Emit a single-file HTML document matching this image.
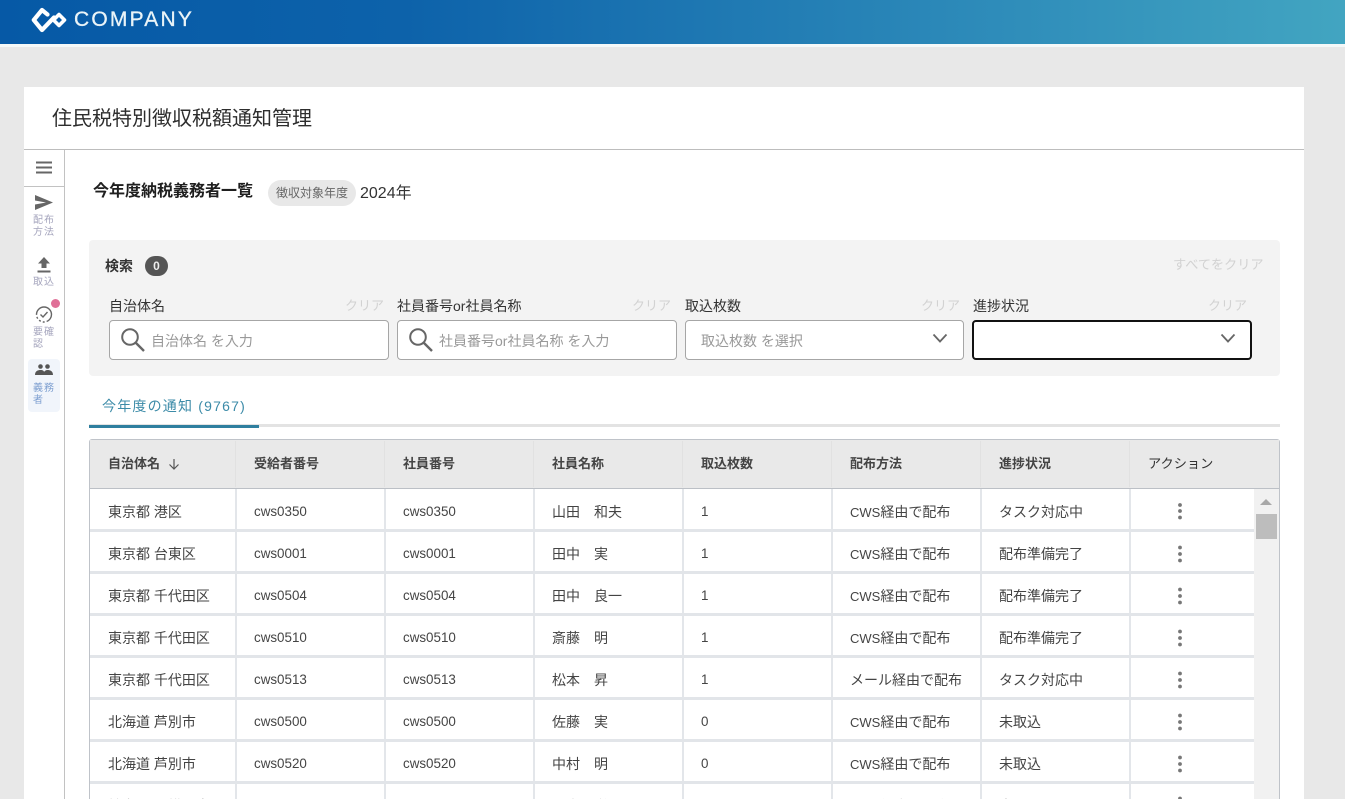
<!DOCTYPE html>
<html lang="ja"><head><meta charset="utf-8"><title>住民税特別徴収税額通知管理</title>
<style>
*{box-sizing:border-box}
html,body{margin:0;padding:0;width:1345px;height:799px;overflow:hidden;background:#e8e8e8;font-family:"Liberation Sans","Noto Sans CJK JP",sans-serif;color:#333}
#root{position:relative;width:1345px;height:799px;overflow:hidden;background:#e8e8e8}
.a{position:absolute;white-space:nowrap}
#hd{left:0;top:0;width:1345px;height:44px;background:linear-gradient(90deg,#0659a6 0%,#0d62aa 30%,#2f8dba 75%,#42a5c1 100%)}
#hl{left:0;top:44px;width:1345px;height:3px;background:#f4f8f8}
#card{left:24px;top:87px;width:1280px;height:712px;background:#fff}
.side{font-size:10px;line-height:12px;color:#a5a5bd;width:24px;letter-spacing:1px;white-space:normal}
.lb{font-size:14px;color:#333;line-height:18px;top:297px}
.cl{font-size:13px;color:#d2d2d2;line-height:16px;top:298px}
.inp{height:40px;background:#fff;border:1px solid #a6a6a6;border-radius:4px}
.ph{font-size:14px;color:#999;line-height:18px;top:332px}
.th{font-size:13px;font-weight:bold;color:#444;line-height:18px;top:455px}
.td{font-size:14px;color:#444;line-height:18px;transform:translateY(1px)}
.l{font-size:13.4px}
.c{font-size:13px}
.v{background:#e3e6ea;width:2px}
.rs{left:90px;width:1164px;height:3px;background:#e2e5e9}
</style></head><body><div id="root">
<div class="a" id="hd"></div><div class="a" id="hl"></div>
<svg class="a" style="left:30px;top:5px" width="40" height="30" viewBox="30 5 40 30" fill="none" stroke="#fff" stroke-width="4.200" stroke-linejoin="round" stroke-linecap="round"><path d="M47.500 14.500 L42 10 L33.800 20 L42 30 L54 17.500"/><path d="M59 14.500 L64.500 20 L59 25.500 L53.500 20Z" stroke-width="3.600"/></svg>
<div class="a" style="left:74px;top:8px;font-size:21px;line-height:24px;color:#eaf4f8;letter-spacing:2.200px;-webkit-text-stroke:.3px #eaf4f8">COMPANY</div>

<div class="a" id="card"></div>
<div class="a" style="left:52px;top:106px;font-size:20px;line-height:26px;color:#2d2d2d">住民税特別徴収税額通知管理</div>
<div class="a" style="left:24px;top:149px;width:1280px;height:1px;background:#bdbdbd"></div>
<div class="a" style="left:64px;top:150px;width:1px;height:649px;background:#c2c2c2"></div>
<div class="a" style="left:24px;top:186px;width:40px;height:1px;background:#c2c2c2"></div>

<svg class="a" style="left:36px;top:161px" width="16" height="13"><path d="M0 1.500H16M0 6.500H16M0 11.500H16" stroke="#666" stroke-width="2"/></svg>
<svg class="a" style="left:35px;top:195px" width="18" height="16"><path d="M0 0 L18 7.500 L0 15 L0 9.500 L11 7.500 L0 5.500Z" fill="#666"/></svg>
<div class="a side" style="left:33px;top:215px">配布方法</div>
<svg class="a" style="left:37px;top:257px" width="14" height="16"><path d="M7 0 L13 6.500 H9.500 V11 H4.500 V6.500 H1Z M0.500 13.500H13.500V15.500H0.500Z" fill="#666"/></svg>
<div class="a side" style="left:33px;top:277px">取込</div>
<svg class="a" style="left:35px;top:305px" width="18" height="19" fill="none" stroke="#666"><circle cx="9" cy="9.500" r="7.500" stroke-width="1.400" stroke-dasharray="9 2 2 2 2 2 2 2 30"/><path d="M5.500 9.500 L8 12 L12.500 7" stroke-width="1.400"/></svg>
<div class="a" style="left:51px;top:299px;width:9px;height:9px;border-radius:50%;background:#e07098"></div>
<div class="a side" style="left:33px;top:327px">要確認</div>
<div class="a" style="left:28px;top:359px;width:32px;height:53px;background:#f1f5fb;border-radius:4px"></div>
<svg class="a" style="left:35px;top:364px" width="18" height="12" fill="#555"><circle cx="5.500" cy="2.500" r="2.300"/><circle cx="12.500" cy="2.500" r="2.300"/><path d="M0 11 C0 7 3 6 5.500 6 C8 6 9 7 9 8 C9.500 7 11 6 12.500 6 C15 6 18 7 18 11Z"/></svg>
<div class="a side" style="left:33px;top:383px;color:#7d9fd0">義務者</div>

<div class="a" style="left:93px;top:182px;font-size:16px;line-height:20px;font-weight:bold;color:#1f1f1f">今年度納税義務者一覧</div>
<div class="a" style="left:268px;top:180px;width:88px;height:26px;border-radius:13px;background:#e8e8e8;font-size:12px;line-height:26px;text-align:center;color:#666">徴収対象年度</div>
<div class="a" style="left:360px;top:184px;font-size:16px;line-height:20px;color:#333">2024年</div>

<div class="a" style="left:89px;top:240px;width:1191px;height:136px;background:#f3f3f3;border-radius:4px"></div>
<div class="a" style="left:105px;top:257px;font-size:14px;line-height:18px;font-weight:bold;color:#333">検索</div>
<div class="a" style="left:145px;top:256px;width:23px;height:20px;border-radius:10px;background:#555;color:#eee;font-size:12px;font-weight:bold;line-height:20px;text-align:center">0</div>
<div class="a cl" style="left:1173px;top:257px;font-size:13.200px">すべてをクリア</div>

<div class="a lb" style="left:109px">自治体名</div><div class="a cl" style="left:345px">クリア</div>
<div class="a inp" style="left:109px;top:320px;width:280px"></div>
<svg class="a" style="left:120px;top:327px" width="26" height="26" fill="none" stroke="#666"><circle cx="10" cy="10" r="7.800" stroke-width="2"/><path d="M15.500 15.500 L24 24" stroke-width="2.400"/></svg>
<div class="a ph" style="left:151px">自治体名 を入力</div>

<div class="a lb" style="left:397px">社員番号or社員名称</div><div class="a cl" style="left:632px">クリア</div>
<div class="a inp" style="left:397px;top:320px;width:280px"></div>
<svg class="a" style="left:408px;top:327px" width="26" height="26" fill="none" stroke="#666"><circle cx="10" cy="10" r="7.800" stroke-width="2"/><path d="M15.500 15.500 L24 24" stroke-width="2.400"/></svg>
<div class="a ph" style="left:439px">社員番号or社員名称 を入力</div>

<div class="a lb" style="left:685px">取込枚数</div><div class="a cl" style="left:921px">クリア</div>
<div class="a inp" style="left:685px;top:320px;width:279px"></div>
<div class="a ph" style="left:701px">取込枚数 を選択</div>
<svg class="a" style="left:932px;top:333px" width="16" height="11" fill="none"><path d="M1.500 1.500 L8 8.500 L14.500 1.500" stroke="#666" stroke-width="1.800"/></svg>

<div class="a lb" style="left:973px">進捗状況</div><div class="a cl" style="left:1208px">クリア</div>
<div class="a inp" style="left:972px;top:320px;width:280px;border:2px solid #111"></div>
<svg class="a" style="left:1220px;top:333px" width="16" height="11" fill="none"><path d="M1.500 1.500 L8 8.500 L14.500 1.500" stroke="#666" stroke-width="1.800"/></svg>

<div class="a" style="left:102px;top:396px;font-size:14px;line-height:20px;color:#3c8ba8;letter-spacing:1.200px">今年度の通知 (9767)</div>
<div class="a" style="left:89px;top:424px;width:1191px;height:3px;background:#e3e3e3"></div>
<div class="a" style="left:89px;top:425px;width:170px;height:3px;background:#2f7f9f"></div>

<div class="a" style="left:89px;top:439px;width:1191px;height:370px;border:1px solid #bfc3c9;border-radius:3px 3px 0 0;background:#fff"></div>
<div class="a" style="left:90px;top:440px;width:1189px;height:49px;background:#e9e9e9;border-bottom:1px solid #bcc0c6"></div>
<div class="a th" style="left:108px">自治体名</div>
<svg class="a" style="left:168px;top:458px" width="12" height="12" fill="none" stroke="#555" stroke-width="1.200"><path d="M6 1V11M1.500 6.500 L6 11 L10.500 6.500"/></svg>
<div class="a th" style="left:254px">受給者番号</div>
<div class="a th" style="left:403px">社員番号</div>
<div class="a th" style="left:552px">社員名称</div>
<div class="a th" style="left:701px">取込枚数</div>
<div class="a th" style="left:850px">配布方法</div>
<div class="a th" style="left:999px">進捗状況</div>
<div class="a th" style="left:1148px;font-size:13.200px;font-weight:normal;color:#333">アクション</div>

<div class="a v" style="left:235px;top:489px;height:310px"></div>
<div class="a v" style="left:384px;top:489px;height:310px"></div>
<div class="a v" style="left:533px;top:489px;height:310px"></div>
<div class="a v" style="left:682px;top:489px;height:310px"></div>
<div class="a v" style="left:831px;top:489px;height:310px"></div>
<div class="a v" style="left:980px;top:489px;height:310px"></div>
<div class="a v" style="left:1129px;top:489px;height:310px"></div>
<div class="a" style="left:235px;top:441px;width:1px;height:46px;background:#e1e1e1"></div>
<div class="a" style="left:384px;top:441px;width:1px;height:46px;background:#e1e1e1"></div>
<div class="a" style="left:533px;top:441px;width:1px;height:46px;background:#e1e1e1"></div>
<div class="a" style="left:682px;top:441px;width:1px;height:46px;background:#e1e1e1"></div>
<div class="a" style="left:831px;top:441px;width:1px;height:46px;background:#e1e1e1"></div>
<div class="a" style="left:980px;top:441px;width:1px;height:46px;background:#e1e1e1"></div>
<div class="a" style="left:1129px;top:441px;width:1px;height:46px;background:#e1e1e1"></div>

<div class="a rs" style="top:529px"></div><div class="a rs" style="top:571px"></div><div class="a rs" style="top:613px"></div><div class="a rs" style="top:655px"></div><div class="a rs" style="top:697px"></div><div class="a rs" style="top:739px"></div><div class="a rs" style="top:781px"></div>

<div class="a td" style="left:108px;top:502px">東京都 港区</div><div class="a td l" style="left:254px;top:502px">cws0350</div><div class="a td l" style="left:403px;top:502px">cws0350</div><div class="a td" style="left:552px;top:502px">山田　和夫</div><div class="a td l" style="left:701px;top:502px">1</div><div class="a td" style="left:850px;top:502px"><span class="c">CWS</span>経由で配布</div><div class="a td" style="left:999px;top:502px">タスク対応中</div>
<div class="a td" style="left:108px;top:544px">東京都 台東区</div><div class="a td l" style="left:254px;top:544px">cws0001</div><div class="a td l" style="left:403px;top:544px">cws0001</div><div class="a td" style="left:552px;top:544px">田中　実</div><div class="a td l" style="left:701px;top:544px">1</div><div class="a td" style="left:850px;top:544px"><span class="c">CWS</span>経由で配布</div><div class="a td" style="left:999px;top:544px">配布準備完了</div>
<div class="a td" style="left:108px;top:586px">東京都 千代田区</div><div class="a td l" style="left:254px;top:586px">cws0504</div><div class="a td l" style="left:403px;top:586px">cws0504</div><div class="a td" style="left:552px;top:586px">田中　良一</div><div class="a td l" style="left:701px;top:586px">1</div><div class="a td" style="left:850px;top:586px"><span class="c">CWS</span>経由で配布</div><div class="a td" style="left:999px;top:586px">配布準備完了</div>
<div class="a td" style="left:108px;top:628px">東京都 千代田区</div><div class="a td l" style="left:254px;top:628px">cws0510</div><div class="a td l" style="left:403px;top:628px">cws0510</div><div class="a td" style="left:552px;top:628px">斎藤　明</div><div class="a td l" style="left:701px;top:628px">1</div><div class="a td" style="left:850px;top:628px"><span class="c">CWS</span>経由で配布</div><div class="a td" style="left:999px;top:628px">配布準備完了</div>
<div class="a td" style="left:108px;top:670px">東京都 千代田区</div><div class="a td l" style="left:254px;top:670px">cws0513</div><div class="a td l" style="left:403px;top:670px">cws0513</div><div class="a td" style="left:552px;top:670px">松本　昇</div><div class="a td l" style="left:701px;top:670px">1</div><div class="a td" style="left:850px;top:670px">メール経由で配布</div><div class="a td" style="left:999px;top:670px">タスク対応中</div>
<div class="a td" style="left:108px;top:712px">北海道 芦別市</div><div class="a td l" style="left:254px;top:712px">cws0500</div><div class="a td l" style="left:403px;top:712px">cws0500</div><div class="a td" style="left:552px;top:712px">佐藤　実</div><div class="a td l" style="left:701px;top:712px">0</div><div class="a td" style="left:850px;top:712px"><span class="c">CWS</span>経由で配布</div><div class="a td" style="left:999px;top:712px">未取込</div>
<div class="a td" style="left:108px;top:754px">北海道 芦別市</div><div class="a td l" style="left:254px;top:754px">cws0520</div><div class="a td l" style="left:403px;top:754px">cws0520</div><div class="a td" style="left:552px;top:754px">中村　明</div><div class="a td l" style="left:701px;top:754px">0</div><div class="a td" style="left:850px;top:754px"><span class="c">CWS</span>経由で配布</div><div class="a td" style="left:999px;top:754px">未取込</div>
<div class="a td" style="left:108px;top:796px">神奈川県 横浜市</div><div class="a td" style="left:552px;top:796px">山本　学</div><div class="a td" style="left:850px;top:796px"><span class="c">CWS</span>経由で配布</div><div class="a td" style="left:999px;top:796px">未取込</div>

<svg class="a" style="left:1176px;top:489px" width="8" height="310" fill="#777">
<circle cx="4" cy="16" r="1.900"/><circle cx="4" cy="22" r="1.900"/><circle cx="4" cy="28.500" r="1.900"/>
<circle cx="4" cy="58.500" r="1.900"/><circle cx="4" cy="65" r="1.900"/><circle cx="4" cy="71.500" r="1.900"/>
<circle cx="4" cy="100.500" r="1.900"/><circle cx="4" cy="107" r="1.900"/><circle cx="4" cy="113.500" r="1.900"/>
<circle cx="4" cy="142.500" r="1.900"/><circle cx="4" cy="149" r="1.900"/><circle cx="4" cy="155.500" r="1.900"/>
<circle cx="4" cy="184.500" r="1.900"/><circle cx="4" cy="191" r="1.900"/><circle cx="4" cy="197.500" r="1.900"/>
<circle cx="4" cy="226.500" r="1.900"/><circle cx="4" cy="233" r="1.900"/><circle cx="4" cy="239.500" r="1.900"/>
<circle cx="4" cy="268.500" r="1.900"/><circle cx="4" cy="275" r="1.900"/><circle cx="4" cy="281.500" r="1.900"/>
<circle cx="4" cy="309.500" r="1.900"/>
</svg>

<div class="a" style="left:1254px;top:489px;width:25px;height:310px;background:#f1f1f1"></div>
<svg class="a" style="left:1260px;top:498px" width="12" height="8"><path d="M0 7 L6 1 L12 7Z" fill="#a8a8a8"/></svg>
<div class="a" style="left:1256px;top:514px;width:21px;height:25px;background:#bdbdbd"></div>
</div></body></html>
